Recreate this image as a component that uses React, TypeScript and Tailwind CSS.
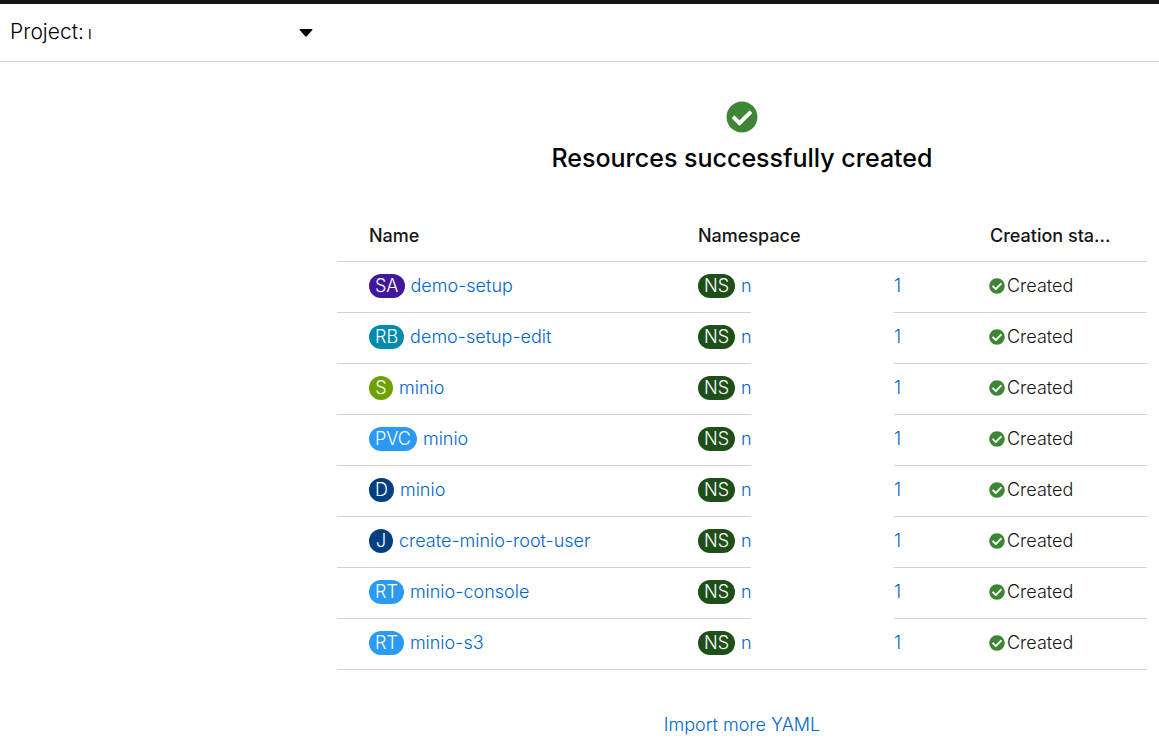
type Resource = { badge: string; color: string; name: string };

const resources: Resource[] = [
  { badge: 'SA', color: 'bg-[#40199a]', name: 'demo-setup' },
  { badge: 'RB', color: 'bg-[#008bad]', name: 'demo-setup-edit' },
  { badge: 'S', color: 'bg-[#6ca100]', name: 'minio' },
  { badge: 'PVC', color: 'bg-[#2b9af3]', name: 'minio' },
  { badge: 'D', color: 'bg-[#004080]', name: 'minio' },
  { badge: 'J', color: 'bg-[#004080]', name: 'create-minio-root-user' },
  { badge: 'RT', color: 'bg-[#2b9af3]', name: 'minio-console' },
  { badge: 'RT', color: 'bg-[#2b9af3]', name: 'minio-s3' },
];

function CheckCircle({ className }: { className: string }) {
  return (
    <svg viewBox="0 0 512 512" fill="currentColor" aria-hidden="true" className={className}>
      <path d="M504 256c0 136.967-111.033 248-248 248S8 392.967 8 256 119.033 8 256 8s248 111.033 248 248zM227.314 387.314l184-184c6.248-6.248 6.248-16.379 0-22.627l-22.627-22.627c-6.248-6.249-16.379-6.249-22.628 0L216 308.118l-70.059-70.059c-6.248-6.248-16.379-6.248-22.628 0l-22.627 22.627c-6.248 6.248-6.248 16.379 0 22.627l104 104c6.249 6.249 16.379 6.249 22.628.001z" />
    </svg>
  );
}

function Badge({ label, color }: { label: string; color: string }) {
  return (
    <span
      className={`inline-flex h-6 min-w-6 shrink-0 items-center justify-center rounded-full px-1.5 text-lg leading-6 text-white ${color}`}
    >
      {label}
    </span>
  );
}

function ResourceRow({ resource, last }: { resource: Resource; last: boolean }) {
  const line = 'h-[51px] border-b border-[#d2d2d2] p-0 pb-0.5';
  return (
    <tr>
      <td className={`${line} pl-8`}>
        <div className="flex items-center gap-1.5">
          <Badge label={resource.badge} color={resource.color} />
          <a href="#resource" className="text-[#0066cc] hover:underline">
            {resource.name}
          </a>
        </div>
      </td>
      <td className={`${line} pl-6`}>
        <div className="flex items-center gap-1.5">
          <Badge label="NS" color="bg-[#1e4f18]" />
          <a href="#namespace" className="text-[#0066cc]">
            n
          </a>
        </div>
      </td>
      <td className={last ? line : 'p-0'} />
      <td className={line}>
        <a href="#namespace" className="text-[#0066cc]">
          1
        </a>
      </td>
      <td className={`${line} pl-[23px]`}>
        <div className="flex items-center gap-0.5">
          <CheckCircle className="size-4 shrink-0 text-[#3e8635]" />
          <span>Created</span>
        </div>
      </td>
    </tr>
  );
}

export default function App() {
  return (
    <div className="min-h-screen bg-white font-['Inter',sans-serif] text-lg leading-6 font-light text-[#151515]">
      <div className="h-1 bg-[#151515]" />
      <header className="flex h-[58px] items-center border-b border-[#d2d2d2] pl-2.5">
        <button type="button" className="flex w-[303px] items-center justify-between text-[21px] text-black">
          <span className="flex items-baseline gap-1">
            Project:
            <span className="text-lg">ı</span>
          </span>
          <svg viewBox="0 0 14 8" aria-hidden="true" className="h-2 w-3.5" fill="currentColor">
            <path d="M1.2 0h11.6q1.2 0 .5 1L8 6.9q-1 1-2 0L.7 1Q0 0 1.2 0z" />
          </svg>
        </button>
      </header>
      <main className="flex flex-col items-center pt-[39px] pr-3 pl-[337px]">
        <CheckCircle className="size-8 text-[#3e8635]" />
        <h1 className="mt-[9px] text-[25px] leading-8 font-medium text-black">Resources successfully created</h1>
        <table className="mt-[35px] w-full table-fixed border-separate border-spacing-0 text-left">
          <colgroup>
            <col />
            <col className="w-[77px]" />
            <col className="w-[143px]" />
            <col className="w-[72px]" />
            <col className="w-[181px]" />
          </colgroup>
          <thead>
            <tr className="h-[53px]">
              <th className="border-b border-[#d2d2d2] p-0 pt-0.5 pl-8 font-medium">Name</th>
              <th colSpan={3} className="border-b border-[#d2d2d2] p-0 pt-0.5 pl-6 font-medium">
                Namespace
              </th>
              <th className="border-b border-[#d2d2d2] p-0 pt-0.5 pl-6 font-medium">Creation sta...</th>
            </tr>
          </thead>
          <tbody>
            {resources.map((resource, index) => (
              <ResourceRow
                key={`${resource.badge}-${resource.name}`}
                resource={resource}
                last={index === resources.length - 1}
              />
            ))}
          </tbody>
        </table>
        <a href="#import" className="mt-[43px] text-[#0066cc] hover:underline">
          Import more YAML
        </a>
      </main>
    </div>
  );
}
